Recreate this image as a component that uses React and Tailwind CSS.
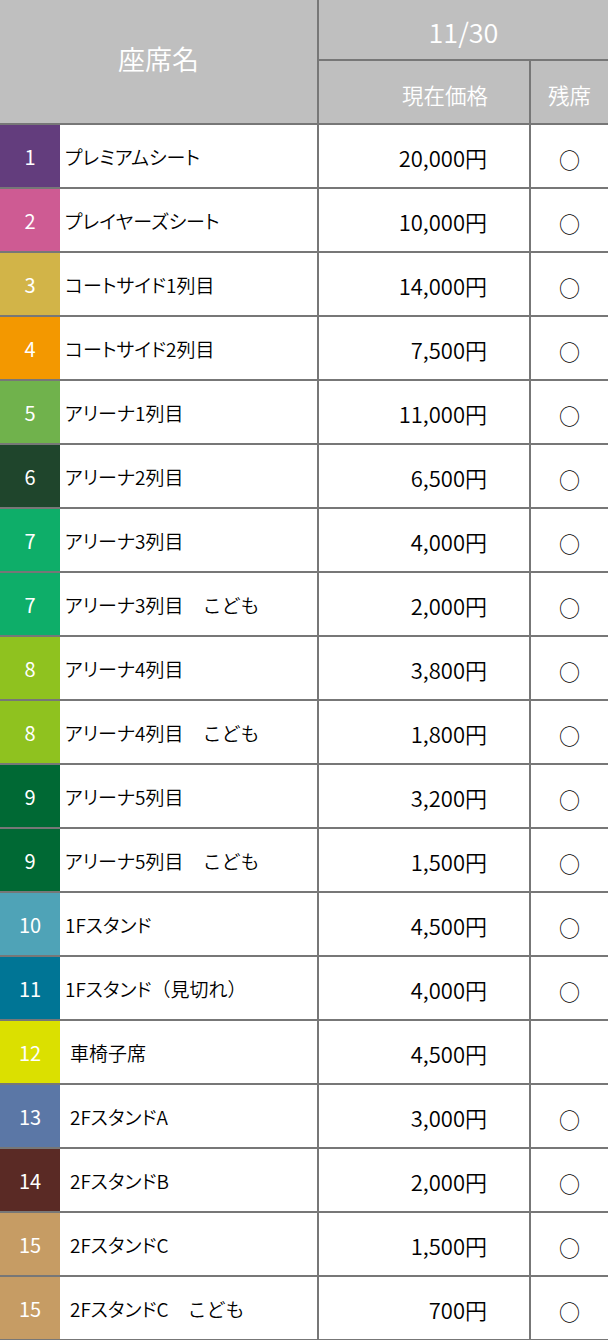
const rows = [
  { no: '1', color: 'bg-[#633d7d]', name: 'プレミアムシート', price: '20,000円', left: '○' },
  { no: '2', color: 'bg-[#ce5b93]', name: 'プレイヤーズシート', price: '10,000円', left: '○' },
  { no: '3', color: 'bg-[#d2b448]', name: 'コートサイド1列目', price: '14,000円', left: '○' },
  { no: '4', color: 'bg-[#f39800]', name: 'コートサイド2列目', price: '7,500円', left: '○' },
  { no: '5', color: 'bg-[#70b24c]', name: 'アリーナ1列目', price: '11,000円', left: '○' },
  { no: '6', color: 'bg-[#1f452c]', name: 'アリーナ2列目', price: '6,500円', left: '○' },
  { no: '7', color: 'bg-[#0eae69]', name: 'アリーナ3列目', price: '4,000円', left: '○' },
  { no: '7', color: 'bg-[#0eae69]', name: 'アリーナ3列目', kids: true, price: '2,000円', left: '○' },
  { no: '8', color: 'bg-[#8fc21f]', name: 'アリーナ4列目', price: '3,800円', left: '○' },
  { no: '8', color: 'bg-[#8fc21f]', name: 'アリーナ4列目', kids: true, price: '1,800円', left: '○' },
  { no: '9', color: 'bg-[#006934]', name: 'アリーナ5列目', price: '3,200円', left: '○' },
  { no: '9', color: 'bg-[#006934]', name: 'アリーナ5列目', kids: true, price: '1,500円', left: '○' },
  { no: '10', color: 'bg-[#4fa3b7]', name: '1Fスタンド', price: '4,500円', left: '○' },
  { no: '11', color: 'bg-[#007595]', name: '1Fスタンド', note: '見切れ', price: '4,000円', left: '○' },
  { no: '12', color: 'bg-[#dbe000]', name: '車椅子席', price: '4,500円', left: '', indent: true },
  { no: '13', color: 'bg-[#5b77a6]', name: '2FスタンドA', price: '3,000円', left: '○', indent: true },
  { no: '14', color: 'bg-[#5a2a25]', name: '2FスタンドB', price: '2,000円', left: '○', indent: true },
  { no: '15', color: 'bg-[#c69c64]', name: '2FスタンドC', price: '1,500円', left: '○', indent: true },
  { no: '15', color: 'bg-[#c69c64]', name: '2FスタンドC', kids: true, price: '700円', left: '○', indent: true },
];

const font = "font-['Noto_Sans_CJK_JP',sans-serif] font-[350]";
const palt = "[font-feature-settings:'palt']";

const App = () => {
  return (
    <div className={`w-[608px] bg-white text-black ${font}`}>
      {/* Header */}
      <div className="flex h-[123px] bg-[#bfbfbf] text-white">
        <div className="w-[317px] flex items-center justify-center text-[27px] pb-[4px]">座席名</div>
        <div className="flex-1 flex flex-col border-l-2 border-[#777]">
          <div className="h-[61px] flex items-center justify-center text-[27px] border-b-2 border-[#777] pt-[6px]">11/30</div>
          <div className="flex-1 flex">
            <div className="w-[210px] flex items-center justify-end pr-[41px] text-[21.5px] pt-[6px]">現在価格</div>
            <div className="flex-1 flex items-center justify-center border-l-2 border-[#777] text-[21.5px] pt-[6px]">残席</div>
          </div>
        </div>
      </div>

      {/* Rows */}
      {rows.map((row, i) => (
        <div key={i} className="flex h-[64px] border-t-2 border-[#777] last:h-[65px] last:border-b">
          <div className="w-[317px] flex">
            <div className={`w-[60px] flex items-center justify-center text-white text-[20px] font-normal pt-[2px] ${row.color}`}>
              {row.no}
            </div>
            <div className={`flex items-center text-[19px] pt-[2px] ${row.indent ? 'pl-[10px]' : 'pl-[5px]'}`}>
              <span className={palt}>{row.name}</span>
              {row.note && <span>（{row.note}）</span>}
              {row.kids && <span className="pl-[19px]">こども</span>}
            </div>
          </div>
          <div className="w-[212px] flex items-center justify-end pr-[42px] border-l-2 border-[#777] text-[22px] pt-[2px]">
            {row.price}
          </div>
          <div className="flex-1 flex items-center justify-center border-l-2 border-[#777] text-[21px] pt-[8px]">
            {row.left}
          </div>
        </div>
      ))}
    </div>
  );
};

export default App;
